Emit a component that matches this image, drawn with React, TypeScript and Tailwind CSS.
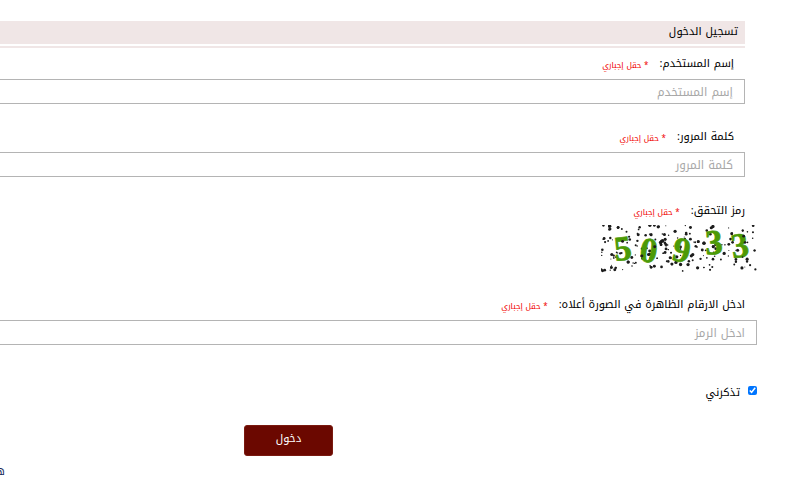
const font = { fontFamily: '"Noto Kufi Arabic", "Noto Sans Arabic", "DejaVu Sans", sans-serif' };

// speckle of the captcha, from a small fixed generator so it stays the same between runs
const dots = (() => {
  let s = 50933;
  const next = () => {
    s = (s * 16807) % 2147483647;
    return s / 2147483647;
  };
  return Array.from({ length: 190 }, () => ({
    x: next() * 156,
    y: next() * 46,
    r: 0.5 + next() * 1.2,
  }));
})();

const digits = [
  { t: "5", x: 13, y: 35, rot: -6 },
  { t: "0", x: 39, y: 37, rot: 8 },
  { t: "9", x: 72, y: 37, rot: 12 },
  { t: "3", x: 104, y: 29, rot: -3 },
  { t: "3", x: 130, y: 32, rot: -8 },
];

function Captcha() {
  return (
    <svg width="156" height="48" viewBox="0 0 156 48" className="block" direction="ltr">
      {dots.map((d, i) => (
        <circle key={i} cx={d.x} cy={d.y} r={d.r} fill="#1c1c1c" />
      ))}
      {digits.map((d, i) => (
        <text
          key={i}
          x={d.x}
          y={d.y}
          fontSize="35"
          fontWeight="700"
          fill="#4c9a06"
          stroke="#4c9a06"
          strokeWidth="0.7"
          fontFamily='"Liberation Serif", serif'
          transform={`rotate(${d.rot} ${d.x + 9} ${d.y - 12})`}
        >
          {d.t}
        </text>
      ))}
      {dots
        .filter((_, i) => i % 7 === 0)
        .map((d, i) => (
          <circle key={i} cx={d.x} cy={d.y} r={d.r} fill="#1c1c1c" />
        ))}
    </svg>
  );
}

function Label({ text, className }: { text: string; className: string }) {
  return (
    <div className={`flex items-center gap-[11px] ${className}`}>
      <span className="text-[11px] leading-[18px] text-black">{text}</span>
      <span className="mt-[3px] text-[8px] leading-[12px] text-[#f00000]">* حقل إجباري</span>
    </div>
  );
}

function Field({ placeholder, className }: { placeholder: string; className: string }) {
  return (
    <input
      readOnly
      placeholder={placeholder}
      className={`block h-[25px] w-full border border-[#b4b4b4] bg-white px-[11px] text-[11.7px] outline-none placeholder:text-[#a8a8a8] ${className}`}
      style={font}
      dir="rtl"
    />
  );
}

export default function App() {
  return (
    <div dir="rtl" className="h-[479px] w-[800px] overflow-hidden bg-white" style={font}>
      <div className="mr-[55px] pt-[21px]">
        <div className="flex h-[23px] items-center bg-[#f0e6e6] px-[7px] text-[11px] text-black">
          تسجيل الدخول
        </div>
        <div className="mt-[2px] h-[2px] bg-[#f0e6e6]" />
      </div>
      <div className="mr-[55px] ml-[-40px]">
        <Label text="إسم المستخدم:" className="mt-[7px] pr-[11px]" />
        <Field placeholder="إسم المستخدم" className="mt-[6px]" />
        <Label text="كلمة المرور:" className="mt-[24px] pr-[11px]" />
        <Field placeholder="كلمة المرور" className="mt-[6px]" />
        <Label text="رمز التحقق:" className="mt-[25px]" />
      </div>
      <div className="mr-[43px] ml-[-40px]">
        <div className="mt-[5px]">
          <Captcha />
        </div>
        <Label text="ادخل الارقام الظاهرة في الصورة أعلاه:" className="mt-[23px] pr-[12px]" />
        <Field placeholder="ادخل الرمز" className="mt-[6px]" />
        <div className="mt-[39px] flex items-start gap-[8px]">
          <input type="checkbox" defaultChecked className="m-0 mt-[2px] size-[9px] accent-[#0075ff]" />
          <span className="text-[11px] leading-[18px] text-black">تذكرني</span>
        </div>
      </div>
      <div className="mt-[23px] flex pr-[467px]">
        <button className="h-[31px] w-[89px] rounded-[3px] border border-[#7a1a10] bg-[#6b0800] pb-[2px] text-[11px] text-white">
          دخول
        </button>
      </div>
      <div className="mt-[8px] flex justify-end">
        <span className="-ml-[4px] text-[11px] leading-[16px] text-[#1a2a5a]">ه</span>
      </div>
    </div>
  );
}
